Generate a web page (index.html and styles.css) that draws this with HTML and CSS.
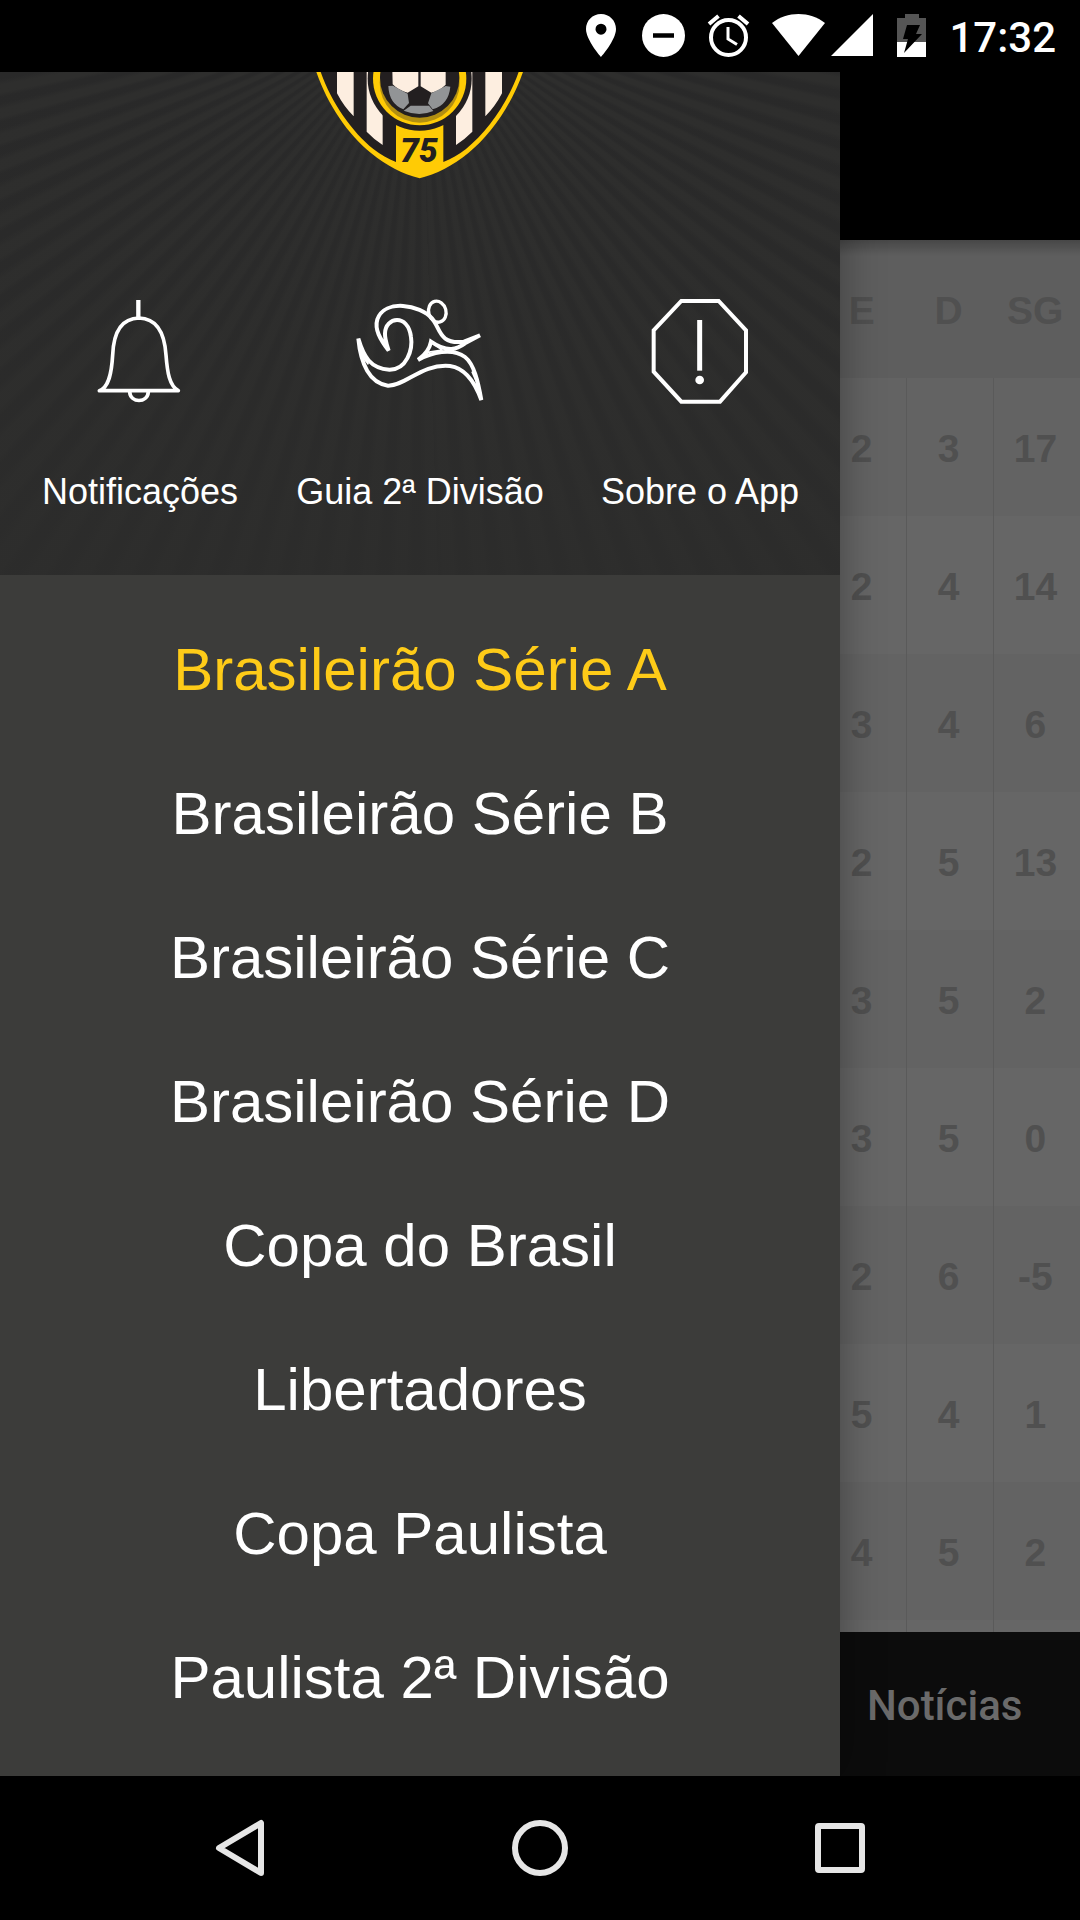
FILE: index.html
```
<!DOCTYPE html>
<html lang="pt-BR">
  <head>
    <title>Brasileirão Série A</title>
    <meta charset="utf-8">
    <meta name="viewport" content="width=device-width, initial-scale=1">
    <link rel="stylesheet" href="styles.css">
  </head>
  <body>

  <div class="statusbar">
    <svg width="34" height="44" viewBox="0 0 34 44"><path fill="#fff" fill-rule="evenodd" d="M15 0C6.500 0 0 6.700 0 15c0 11 15 28 15 28s15-17 15-28C30 6.700 23.500 0 15 0zm0 9.700a5.500 5.500 0 1 1 0 11 5.500 5.500 0 0 1 0-11z"/></svg>
    <svg width="43" height="44" viewBox="0 0 43 44"><circle cx="21.500" cy="21.500" r="21.500" fill="#fff"/><path d="M11 21.500h21" stroke="#000" stroke-width="4.500"/></svg>
    <svg width="43" height="44" viewBox="0 0 43 44" fill="none" stroke="#fff" stroke-width="4"><circle cx="21.500" cy="23.500" r="17.500"/><path d="M2 10L11.500 2M41 10L31.500 2"/><path d="M21 13v12l9 5.500" stroke-width="3"/></svg>
    <div class="signal">
      <svg width="53" height="44" viewBox="0 0 53 44"><path fill="#fff" d="M0 9C15-3 38-3 53 9L26.500 42z"/></svg>
      <svg width="42" height="44" viewBox="0 0 42 44"><path fill="#fff" d="M42 0v42H0z"/></svg>
    </div>
    <svg width="30" height="44" viewBox="0 0 30 44"><path fill="#555" d="M8 0h14v4h7v24H0V4h8z"/><path fill="#fff" d="M0 28h29v15H0z"/><path fill="#000" d="M10 11h13l-4 9h6L7 39l4-14H6z"/></svg>
    <span class="clock">17:32</span>
  </div>

  <div class="app">
    <nav class="drawer">
      <div class="drawer-header">
        <svg class="crest" width="240" height="108" viewBox="0 36 720 324">
          <path fill="#ffcb05" d="M47 30C80 130 145 225 212 278C260 318 310 342 359 355C408 342 458 318 506 278C573 225 638 130 671 30z"/>
          <path fill="#231f20" d="M60 30C92 125 155 215 220 267C242 285 265 296 288 306V195H430V306C453 296 476 285 498 267C563 215 626 125 658 30z"/>
          <path fill="#fdeee0" d="M111 30h50v139q-30-30-50-69zM200 30h48v225q-25-16-48-40zM606 30h-50v139q30-30 50-69zM517 30h-49v225q25-16 49-40z"/>
          <circle cx="359" cy="56" r="156" fill="#231f20"/>
          <circle cx="359" cy="56" r="140" fill="#ffcb05"/>
          <circle cx="359" cy="68" r="120" fill="#b28f12"/>
          <circle cx="359" cy="54" r="119" fill="#231f20"/>
          <path fill="#fdeee0" d="M277 30h78v49l-32 19q-28-7-45-25zM362 30h75v44q-18 18-43 24l-32-19z"/>
          <path fill="#929496" d="M265 78l14-1 44 24 4 28-17 19q-43-17-45-70zM451 80l-14-2-43 22-10 30 14 18q48-14 53-68zM332 137h55l13 16q-42 18-89-1z"/>
          <text class="crest-year" x="357" y="307" text-anchor="middle">75</text>
        </svg>
        <div class="shortcuts">
          <a href="#notificacoes">
            <svg width="120" height="140" viewBox="0 0 360 420" fill="none" stroke="#fff" stroke-width="11" stroke-linecap="round" stroke-linejoin="round"><path stroke-width="13" stroke-linecap="butt" d="M175 60v54"/><path d="M58 332C87 322 95 277 98 225C101 150 130 115 177 114C224 115 253 150 258 225C262 277 268 318 295 332zM149 336c3 34 53 34 56 0"/></svg>
            <span>Notificações</span>
          </a>
          <a href="#guia">
            <svg width="180" height="140" viewBox="0 0 540 420" fill="none" stroke="#fff" stroke-width="12"><path d="M176 212C150 177 133 148 142 118C165 55 270 75 306 115C332 145 325 194 402 185L450 166L405 190C382 207 354 220 303 185C298 213 281 228 264 240C304 218 366 202 405 231C432 252 444 304 454 360C438 316 410 265 360 258C275 250 227 318 174 317C119 310 92 252 85 176C101 230 121 266 178 269C230 270 249 208 243 171C234 99 166 111 165 160C164 176 171 196 176 212z"/><path d="M303 185c1 15-6 24-15 33l48-8zM440 290l8 35-22-50zM92 203l10 33 13 17z" stroke-width="5"/><ellipse cx="322" cy="95" rx="26" ry="32" transform="rotate(-15 322 95)" stroke-width="10"/></svg>
            <span>Guia 2ª Divisão</span>
          </a>
          <a href="#sobre">
            <svg width="140" height="140" viewBox="0 0 420 420" fill="none" stroke="#fff" stroke-width="12"><path d="M154 63h112l82 88v126l-78 88H154l-83-90V151z"/><path stroke-width="15" d="M209 120v152"/><circle cx="209" cy="300" r="13" fill="#fff" stroke="none"/></svg>
            <span>Sobre o App</span>
          </a>
        </div>
      </div>

      <ul class="menu">
        <li><a class="active" href="#serie-a">Brasileirão Série A</a></li>
        <li><a href="#serie-b">Brasileirão Série B</a></li>
        <li><a href="#serie-c">Brasileirão Série C</a></li>
        <li><a href="#serie-d">Brasileirão Série D</a></li>
        <li><a href="#copa-do-brasil">Copa do Brasil</a></li>
        <li><a href="#libertadores">Libertadores</a></li>
        <li><a href="#copa-paulista">Copa Paulista</a></li>
        <li><a href="#paulista-2">Paulista 2ª Divisão</a></li>
      </ul>
    </nav>

    <div class="content">
      <div class="toolbar"></div>
      <div class="standings">
        <table>
          <thead>
            <tr><th>E</th><th>D</th><th>SG</th></tr>
          </thead>
          <tbody>
            <tr><td>2</td><td>3</td><td>17</td></tr>
            <tr><td>2</td><td>4</td><td>14</td></tr>
            <tr><td>3</td><td>4</td><td>6</td></tr>
            <tr><td>2</td><td>5</td><td>13</td></tr>
            <tr><td>3</td><td>5</td><td>2</td></tr>
            <tr><td>3</td><td>5</td><td>0</td></tr>
            <tr><td>2</td><td>6</td><td>-5</td></tr>
            <tr><td>5</td><td>4</td><td>1</td></tr>
            <tr><td>4</td><td>5</td><td>2</td></tr>
            <tr class="next"><td></td><td></td><td></td></tr>
          </tbody>
        </table>
      </div>
      <a class="tab" href="#noticias">Notícias</a>
    </div>
  </div>

  <div class="navbar">
    <button type="button" aria-label="Voltar">
      <svg width="60" height="60" viewBox="0 0 60 60"><path d="M51 5v50L9 30z"/></svg>
    </button>
    <button type="button" aria-label="Início">
      <svg width="60" height="60" viewBox="0 0 60 60"><circle cx="30" cy="30" r="25"/></svg>
    </button>
    <button type="button" aria-label="Recentes">
      <svg width="60" height="60" viewBox="0 0 60 60"><rect x="8" y="8" width="44" height="44" rx="1"/></svg>
    </button>
  </div>

  </body>
</html>
```
FILE: styles.css
```
* {
  box-sizing: border-box;
}

body {
  margin: 0;
  min-height: 100vh;
  display: flex;
  flex-direction: column;
  background: #000;
  color: #fff;
  font-family: "Liberation Sans", Arial, sans-serif;
}

a {
  color: inherit;
  text-decoration: none;
}

svg {
  display: block;
}

/* system bars */
.statusbar {
  display: flex;
  align-items: center;
  justify-content: flex-end;
  gap: 22px;
  height: 72px;
  padding-right: 24px;
}

.signal {
  display: flex;
  gap: 6px;
  padding-right: 2px;
}

.clock {
  padding-top: 4px;
  font: 500 42px/48px Roboto, sans-serif;
}

.navbar {
  display: grid;
  grid-template-columns: repeat(3, 1fr);
  height: 144px;
  padding: 0 90px;
}

.navbar button {
  display: flex;
  align-items: center;
  justify-content: center;
  padding: 0;
  border: 0;
  background: none;
}

.navbar svg {
  fill: none;
  stroke: #e6e6e6;
  stroke-width: 6;
  stroke-linejoin: round;
}

/* drawer */
.app {
  flex: 1;
  display: grid;
  grid-template-columns: minmax(0, 7fr) minmax(0, 2fr);
}

.drawer {
  position: relative;
  z-index: 1;
  background: #3c3c3a;
  box-shadow: 0 0 40px rgba(0,0,0,0.35);
  clip-path: inset(0 -48px 0 0);
}

.drawer-header {
  display: flex;
  flex-direction: column;
  align-items: center;
  gap: 100px;
  padding-bottom: 61px;
  background:
    linear-gradient(rgba(45,45,44,0), rgba(45,45,44,0.8)),
    repeating-conic-gradient(from 178.2deg at 50% -67px, #2e2e2d 0deg 1deg, #292929 1.8deg 2.6deg, #2e2e2d 3.2deg);
}

.crest-year {
  font: italic 900 100px Roboto, sans-serif;
  fill: #231f20;
}

.shortcuts {
  display: grid;
  grid-template-columns: repeat(3, 1fr);
  width: 100%;
}

.shortcuts a {
  display: flex;
  flex-direction: column;
  align-items: center;
  gap: 50px;
  font-size: 36px;
  line-height: 44px;
  white-space: nowrap;
}

.menu {
  list-style: none;
  margin: 0;
  padding: 23px 0;
}

.menu a {
  display: block;
  font-size: 60px;
  line-height: 144px;
  text-align: center;
}

.menu .active {
  color: #fecb18;
}

/* standings behind the drawer */
.content {
  display: flex;
  flex-direction: column;
}

.toolbar {
  height: 168px;
}

.standings {
  flex: 1;
  margin-left: -20px;
  background: linear-gradient(rgba(0,0,0,0.25), transparent 16px), #666;
}

table {
  width: 100%;
  table-layout: fixed;
  border-collapse: collapse;
  color: #505050;
  font-size: 39px;
  font-weight: bold;
}

th, td {
  height: 138px;
  padding: 4px 3px 0 0;
  text-align: center;
}

th {
  background: rgba(0,0,0,0.07);
}

td + td {
  border-left: 1px solid #5a5a5a;
}

tbody tr:nth-child(odd) {
  background: #636363;
}

.next td {
  height: 12px;
}

.tab {
  height: 144px;
  padding-left: 27px;
  background: #0c0c0c;
  color: #6a6a6a;
  font: 500 42px/148px Roboto, sans-serif;
}
```
